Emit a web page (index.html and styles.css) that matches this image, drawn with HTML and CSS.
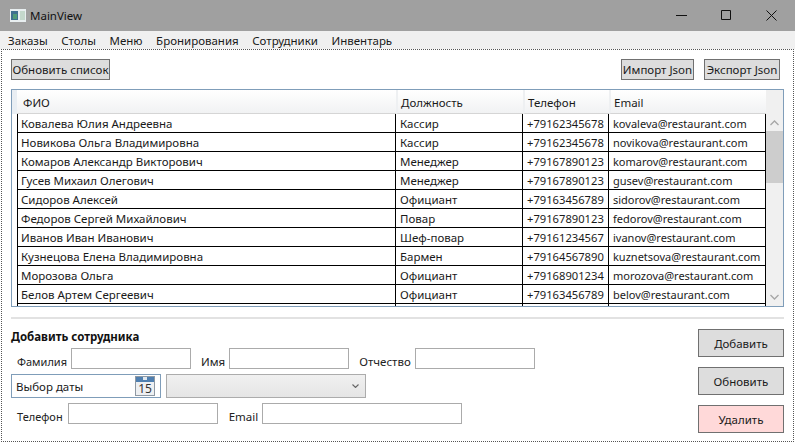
FILE: index.html
```html
<!DOCTYPE html>
<html>
  <head>
    <meta charset="UTF-8">
    <title>MainView</title>
    <link rel="stylesheet" href="styles.css">
  </head>
  <body>
    <div class="window">
      <div class="titlebar">
        <svg class="app-icon" width="16" height="16" viewBox="0 0 16 16">
          <rect x="0" y="1" width="16" height="13" fill="#e8eef0"/>
          <rect x="1" y="3" width="7" height="9" fill="#3f6f8f"/>
          <rect x="3" y="6" width="4" height="5" fill="#4f9a78"/>
          <rect x="10" y="3" width="5" height="9" fill="#c4d8cc"/>
        </svg>
        <span class="title">MainView</span>
        <div class="controls">
          <svg class="ctl-min" width="11" height="11" viewBox="0 0 11 11"><path d="M0 5.5H11" stroke="#111" fill="none"/></svg>
          <svg class="ctl-max" width="11" height="11" viewBox="0 0 11 11"><path d="M.5.5H9.5V9.5H.5Z" stroke="#111" fill="none"/></svg>
          <svg class="ctl-close" width="11" height="11" viewBox="0 0 11 11"><path d="M.5.5L10.5 10.5M10.5.5L.5 10.5" stroke="#111" fill="none"/></svg>
        </div>
      </div>

      <div class="menu">
        <span>Заказы</span>
        <span>Столы</span>
        <span>Меню</span>
        <span>Бронирования</span>
        <span>Сотрудники</span>
        <span>Инвентарь</span>
      </div>

      <div class="content">
        <div class="toolbar">
          <button class="btn btn-refresh">Обновить список</button>
          <div class="toolbar-right">
            <button class="btn btn-import">Импорт Json</button>
            <button class="btn btn-export">Экспорт Json</button>
          </div>
        </div>

        <div class="grid">
          <div class="grid-main">
            <table>
              <colgroup>
                <col class="c-name"><col class="c-role"><col class="c-phone"><col class="c-mail">
              </colgroup>
              <thead>
                <tr><th>ФИО</th><th>Должность</th><th>Телефон</th><th>Email</th></tr>
              </thead>
              <tbody>
                <tr><td>Ковалева Юлия Андреевна</td><td>Кассир</td><td>+79162345678</td><td>kovaleva@restaurant.com</td></tr>
                <tr><td>Новикова Ольга Владимировна</td><td>Кассир</td><td>+79162345678</td><td>novikova@restaurant.com</td></tr>
                <tr><td>Комаров Александр Викторович</td><td>Менеджер</td><td>+79167890123</td><td>komarov@restaurant.com</td></tr>
                <tr><td>Гусев Михаил Олегович</td><td>Менеджер</td><td>+79167890123</td><td>gusev@restaurant.com</td></tr>
                <tr><td>Сидоров Алексей</td><td>Официант</td><td>+79163456789</td><td>sidorov@restaurant.com</td></tr>
                <tr><td>Федоров Сергей Михайлович</td><td>Повар</td><td>+79167890123</td><td>fedorov@restaurant.com</td></tr>
                <tr><td>Иванов Иван Иванович</td><td>Шеф-повар</td><td>+79161234567</td><td>ivanov@restaurant.com</td></tr>
                <tr><td>Кузнецова Елена Владимировна</td><td>Бармен</td><td>+79164567890</td><td>kuznetsova@restaurant.com</td></tr>
                <tr><td>Морозова Ольга</td><td>Официант</td><td>+79168901234</td><td>morozova@restaurant.com</td></tr>
                <tr><td>Белов Артем Сергеевич</td><td>Официант</td><td>+79163456789</td><td>belov@restaurant.com</td></tr>
                <tr><td></td><td></td><td></td><td></td></tr>
              </tbody>
            </table>
          </div>
          <div class="scrollbar">
            <svg width="9" height="6" viewBox="0 0 9 6"><path d="M.5 5L4.5 1L8.5 5" stroke="#a6a6a6" stroke-width="1.3" fill="none"/></svg>
            <div class="thumb"></div>
            <svg class="arrow-down" width="9" height="6" viewBox="0 0 9 6"><path d="M.5 1L4.5 5L8.5 1" stroke="#a6a6a6" stroke-width="1.3" fill="none"/></svg>
          </div>
        </div>

        <div class="divider"></div>

        <div class="bottom">
          <div class="form">
            <h3>Добавить сотрудника</h3>
            <div class="form-row row-names">
              <label class="l-last">Фамилия</label><input class="field" type="text">
              <label class="l-first">Имя</label><input class="field" type="text">
              <label class="l-middle">Отчество</label><input class="field" type="text">
            </div>
            <div class="form-row row-picks">
              <div class="datepicker">
                <span>Выбор даты</span>
                <svg width="20" height="20" viewBox="0 0 20 20">
                  <rect x=".5" y=".5" width="19" height="19" fill="#eef0f2" stroke="#8f99a3"/>
                  <rect x="1" y="1" width="18" height="5" fill="#4f7fb0"/>
                  <rect x="8" y="1" width="4" height="3" fill="#dfe8f0"/>
                  <text x="10" y="17" class="cal-day">15</text>
                </svg>
              </div>
              <div class="combo">
                <svg width="7" height="4" viewBox="0 0 7 4"><path d="M.5 .5L3.5 3.5L6.5 .5" stroke="#666" stroke-width="1.1" fill="none"/></svg>
              </div>
            </div>
            <div class="form-row row-contact">
              <label class="l-phone">Телефон</label><input class="field" type="text">
              <label class="l-mail">Email</label><input class="field field-mail" type="text">
            </div>
          </div>
          <div class="actions">
            <button class="btn action">Добавить</button>
            <button class="btn action">Обновить</button>
            <button class="btn action danger">Удалить</button>
          </div>
        </div>
      </div>
    </div>
  </body>
</html>
```

FILE: styles.css
```css
html, body {
  margin: 0;
  padding: 0;
}

body {
  background-color: #fff;
  color: #1a1a1a;
  font-family: "Noto Sans", "Open Sans", sans-serif;
  font-size: 11.5px;
}

.window {
  display: flex;
  flex-direction: column;
  height: 443px;
  overflow: hidden;
}

.titlebar {
  align-items: center;
  background-color: #a0a0a0;
  box-sizing: border-box;
  display: flex;
  flex: none;
  height: 31px;
  padding-left: 10px;
}

.title {
  color: #111;
  font-size: 11.5px;
  margin-left: 4px;
}

.controls {
  align-items: center;
  display: flex;
  gap: 34px;
  margin-left: auto;
  margin-right: 18px;
}

.menu {
  background-color: #f0f0f0;
  display: flex;
  flex: none;
  gap: 13.5px;
  height: 18px;
  line-height: 20px;
  padding-left: 8px;
}

.content {
  border: 1px dotted #555;
  box-sizing: border-box;
  display: flex;
  flex: none;
  flex-direction: column;
  height: 393px;
  margin: 0 1px 0 1px;
  padding: 9px 9px 0 9px;
}

.btn {
  background-color: #ddd;
  border: 1px solid #707070;
  box-sizing: border-box;
  color: #1a1a1a;
  font-family: inherit;
  font-size: 11.5px;
  height: 21px;
  padding: 0;
  white-space: nowrap;
}

.toolbar {
  display: flex;
  justify-content: space-between;
  margin-right: 4px;
}

.toolbar-right {
  display: flex;
  gap: 10px;
}

.btn-refresh {
  width: 99px;
}

.btn-import {
  width: 73px;
}

.btn-export {
  width: 76px;
}

.grid {
  border: 1px solid #7f9db9;
  box-sizing: border-box;
  display: flex;
  height: 218px;
  margin-top: 9px;
  overflow: hidden;
}

.grid-main {
  background: linear-gradient(#e9eef3, #e9eef3) no-repeat 0 0 / 5px 24px;
  box-sizing: border-box;
  flex: none;
  overflow: hidden;
  padding-left: 5px;
  width: 754px;
}

table {
  border-collapse: separate;
  border-spacing: 0;
  table-layout: fixed;
  width: 749px;
}

.c-name {
  width: 379px;
}

.c-role {
  width: 127px;
}

.c-phone {
  width: 86px;
}

.c-mail {
  width: 157px;
}

th {
  background: linear-gradient(#fff, #f1f2f3);
  border-bottom: 1px solid #d5d5d5;
  border-left: 2px solid #eef0f2;
  box-sizing: border-box;
  font-weight: normal;
  height: 24px;
  padding: 2px 0 0 3px;
  text-align: left;
}

th:first-child {
  border-left: 0;
  padding-left: 6px;
}

td {
  border-bottom: 1px solid #000;
  border-right: 1px solid #000;
  box-sizing: border-box;
  height: 19px;
  overflow: hidden;
  padding: 0 0 0 3px;
  white-space: nowrap;
}

td:first-child {
  border-left: 1px solid #000;
}

td:nth-child(2) {
  padding-left: 4px;
}

td:nth-child(3) {
  font-size: 11.2px;
  padding-left: 4px;
}

td:last-child {
  font-size: 11px;
  padding-left: 4px;
}

.scrollbar {
  align-items: center;
  background-color: #f0f0f0;
  display: flex;
  flex: 1;
  flex-direction: column;
  padding-top: 30px;
}

.thumb {
  background-color: #cdcdcd;
  flex: none;
  height: 52px;
  margin-top: 5px;
  width: 100%;
}

.arrow-down {
  margin-top: auto;
  margin-bottom: 6px;
}

.divider {
  background-color: #e2e2e2;
  flex: none;
  height: 2px;
  margin-top: 10px;
}

.bottom {
  display: flex;
  justify-content: space-between;
}

.form {
  display: flex;
  flex-direction: column;
}

h3 {
  color: #111;
  font-size: 11.5px;
  font-weight: bold;
  line-height: 16px;
  margin: 10px 0 0 0;
}

.form-row {
  align-items: center;
  display: flex;
}

.row-names {
  margin-top: 3px;
}

.row-picks {
  gap: 5px;
  margin-top: 5px;
}

.row-contact {
  margin-top: 5px;
}

.field {
  background-color: #fff;
  border: 1px solid #ababab;
  box-sizing: border-box;
  height: 21px;
  margin: 0;
  padding: 0;
  width: 120px;
}

.row-contact .field {
  width: 150px;
}

.row-contact .field-mail {
  width: 200px;
}

label {
  color: #222;
  padding-top: 5px;
}

.l-last {
  font-size: 11px;
  margin: 0 4px 0 6px;
}

.l-first {
  margin: 0 4px 0 10px;
}

.l-middle {
  margin: 0 4px 0 10px;
}

.l-phone {
  font-size: 11px;
  margin: 0 5px 0 6px;
}

.l-mail {
  margin: 0 4px 0 11px;
}

.datepicker {
  align-items: center;
  border: 1px solid #7f9db9;
  box-sizing: border-box;
  display: flex;
  height: 24px;
  justify-content: space-between;
  padding: 0 5px 0 4px;
  width: 150px;
}

.cal-day {
  fill: #333;
  font-family: "Noto Sans", sans-serif;
  font-size: 12px;
  text-anchor: middle;
}

.combo {
  align-items: center;
  background: linear-gradient(#f0f0f0, #e5e5e5);
  border: 1px solid #acacac;
  box-sizing: border-box;
  display: flex;
  height: 24px;
  justify-content: flex-end;
  padding-right: 6px;
  width: 200px;
}

.actions {
  display: flex;
  flex-direction: column;
  gap: 10px;
  padding-top: 10px;
}

.action {
  height: 28px;
  width: 86px;
}

.danger {
  background-color: #ffd9d9;
}
```
